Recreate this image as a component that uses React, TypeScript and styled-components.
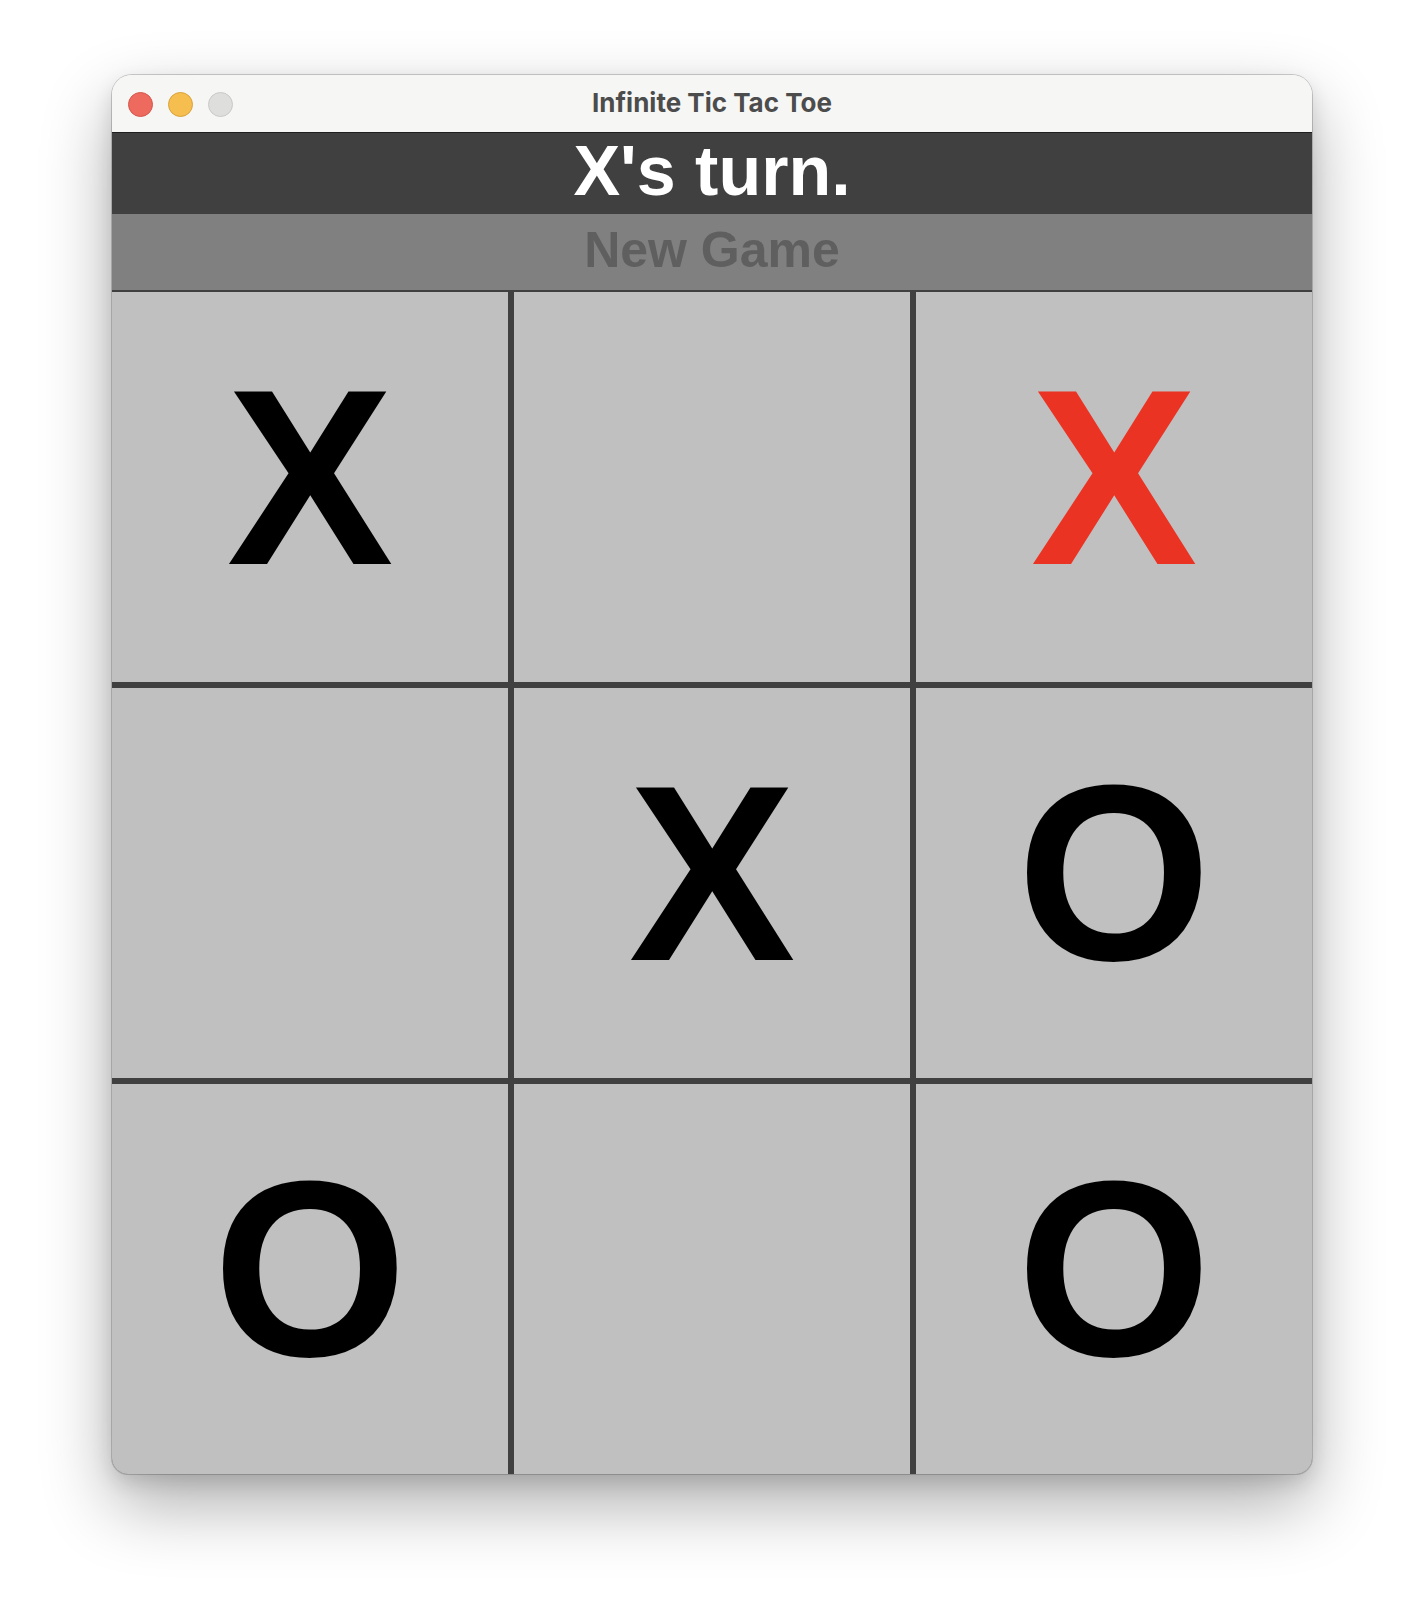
import styled, { createGlobalStyle } from "styled-components"

type Mark = "X" | "O" | ""

type Cell = {
  mark: Mark
  highlight?: boolean
}

const board: Cell[] = [
  { mark: "X" },
  { mark: "" },
  { mark: "X", highlight: true },
  { mark: "" },
  { mark: "X" },
  { mark: "O" },
  { mark: "O" },
  { mark: "" },
  { mark: "O" },
]

export default function App() {
  return (
    <>
      <GlobalStyle />
      <Page>
        <Window>
          <TitleBar>
            <Lights>
              <Light color="#ee6a5f" edge="#d5564c" />
              <Light color="#f5be4f" edge="#d9a23a" />
              <Light color="#dededc" edge="#c8c8c6" />
            </Lights>
            <Title>Infinite Tic Tac Toe</Title>
          </TitleBar>
          <Status>X's turn.</Status>
          <NewGame disabled>New Game</NewGame>
          <Board>
            {board.map((cell, index) => (
              <Square key={index} highlight={cell.highlight}>
                {cell.mark}
              </Square>
            ))}
          </Board>
        </Window>
      </Page>
    </>
  )
}

const GlobalStyle = createGlobalStyle`
  html, body {
    margin: 0;
    padding: 0;
    background: #ffffff;
  }
`

const Page = styled.div`
  width: 1424px;
  height: 1624px;
  display: flex;
  justify-content: center;
  align-items: flex-start;
  padding-top: 75px;
  box-sizing: border-box;
`

const Window = styled.div`
  width: 1200px;
  display: flex;
  flex-direction: column;
  border-radius: 20px 20px 16px 16px;
  overflow: hidden;
  box-shadow: 0 0 0 1px rgba(0, 0, 0, 0.18), 0 30px 70px rgba(0, 0, 0, 0.32),
    0 8px 20px rgba(0, 0, 0, 0.12);
`

const TitleBar = styled.div`
  height: 57px;
  background: #f6f6f4;
  border-bottom: 1px solid #1f1f1f;
  display: flex;
  align-items: center;
  justify-content: center;
  position: relative;
`

const Lights = styled.div`
  position: absolute;
  left: 16px;
  top: 17px;
  display: flex;
  gap: 15px;
`

const Light = styled.span<{ color: string; edge: string }>`
  width: 23px;
  height: 23px;
  border-radius: 50%;
  background: ${(p) => p.color};
  border: 1px solid ${(p) => p.edge};
`

const Title = styled.div`
  font-family: Inter, "Liberation Sans", sans-serif;
  font-weight: 700;
  font-size: 26px;
  color: #4c4c4c;
  padding-bottom: 2px;
`

const Status = styled.div`
  height: 81px;
  box-sizing: border-box;
  padding-bottom: 5px;
  background: #404040;
  color: #ffffff;
  display: flex;
  align-items: center;
  justify-content: center;
  font-family: "Liberation Sans", Arial, sans-serif;
  font-weight: 700;
  font-size: 70px;
`

const NewGame = styled.button`
  height: 76px;
  border: none;
  margin: 0;
  padding: 0 0 4px;
  background: #808080;
  color: #5f5f5f;
  font-family: "Liberation Sans", Arial, sans-serif;
  font-weight: 700;
  font-size: 50px;
  display: flex;
  align-items: center;
  justify-content: center;
`

const Board = styled.div`
  display: grid;
  grid-template-columns: repeat(3, 1fr);
  grid-template-rows: repeat(3, 390px);
  gap: 6px;
  background: #404040;
  border-top: 2px solid #404040;
`

const Square = styled.div<{ highlight?: boolean }>`
  background: #c0c0c0;
  display: flex;
  align-items: center;
  justify-content: center;
  padding-bottom: 20px;
  box-sizing: border-box;
  font-family: "Liberation Sans", Arial, sans-serif;
  font-weight: 700;
  font-size: 250px;
  color: ${(p) => (p.highlight ? "#eb3324" : "#000000")};
`
